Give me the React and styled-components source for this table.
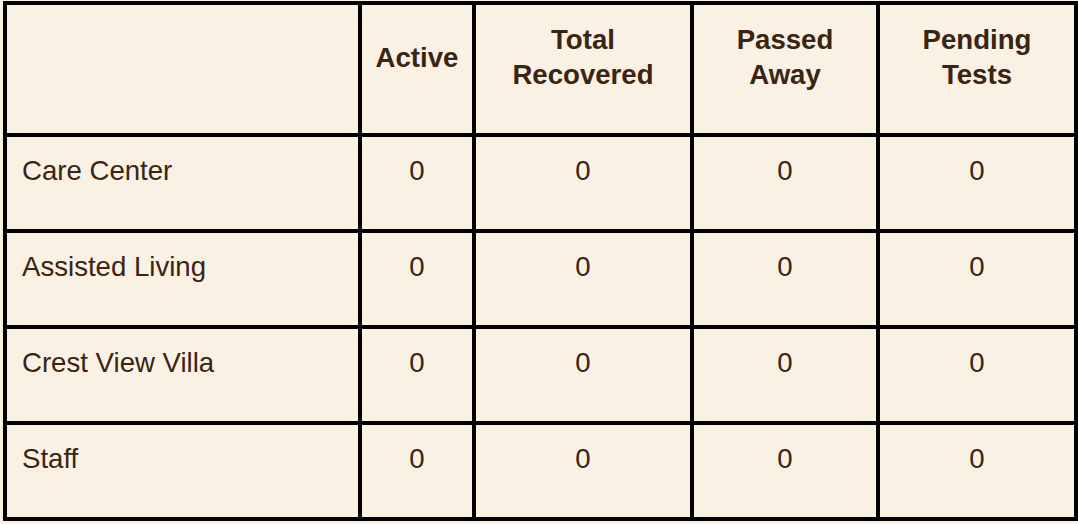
import React from 'react'
import styled, { createGlobalStyle } from 'styled-components'

const GlobalStyle = createGlobalStyle`
    body {
        margin: 0;
        background: #f9f1e4;
        font-family: "Liberation Sans", Arial, Helvetica, sans-serif;
    }
`

const Table = styled.table`
    margin: 1px 0 0 3px;
    width: 1075px;
    table-layout: fixed;
    border-collapse: separate;
    border-spacing: 0;
    border: 2px solid #000;
    background: #f9f1e4;
    color: #3b2412;
    font-size: 27.6px;
`

const HeadCell = styled.th`
    border: 2px solid #000;
    padding: 17px 8px 41px;
    line-height: 35px;
    font-weight: bold;
    text-align: center;
    vertical-align: middle;
`

const Cell = styled.td`
    border: 2px solid #000;
    padding: 16px 15px 41px;
    line-height: 35px;
    text-align: ${props => props.name ? 'left' : 'center'};
    vertical-align: top;
    white-space: nowrap;
`

const columns = [
    { width: 355, title: '' },
    { width: 114, title: 'Active' },
    { width: 218, title: ['Total', 'Recovered'] },
    { width: 186, title: ['Passed', 'Away'] },
    { width: 198, title: ['Pending', 'Tests'] },
]

const rows = [
    { id: 1, name: 'Care Center', values: [0, 0, 0, 0] },
    { id: 2, name: 'Assisted Living', values: [0, 0, 0, 0] },
    { id: 3, name: 'Crest View Villa', values: [0, 0, 0, 0] },
    { id: 4, name: 'Staff', values: [0, 0, 0, 0] },
]

const Title = ({ title }) => {
    if (!Array.isArray(title)) return title
    return title.map((line, i) => (
        <React.Fragment key={line}>
            {i > 0 && <br />}
            {line}
        </React.Fragment>
    ))
}

export default function App() {
    return (
        <>
            <GlobalStyle />
            <Table>
                <colgroup>
                    {columns.map((col, i) => <col key={i} style={{ width: col.width }} />)}
                </colgroup>
                <thead>
                    <tr>
                        {columns.map((col, i) => (
                            <HeadCell key={i}><Title title={col.title} /></HeadCell>
                        ))}
                    </tr>
                </thead>
                <tbody>
                    {rows.map(row => (
                        <tr key={row.id}>
                            <Cell name>{row.name}</Cell>
                            {row.values.map((v, i) => <Cell key={i}>{v}</Cell>)}
                        </tr>
                    ))}
                </tbody>
            </Table>
        </>
    )
}
